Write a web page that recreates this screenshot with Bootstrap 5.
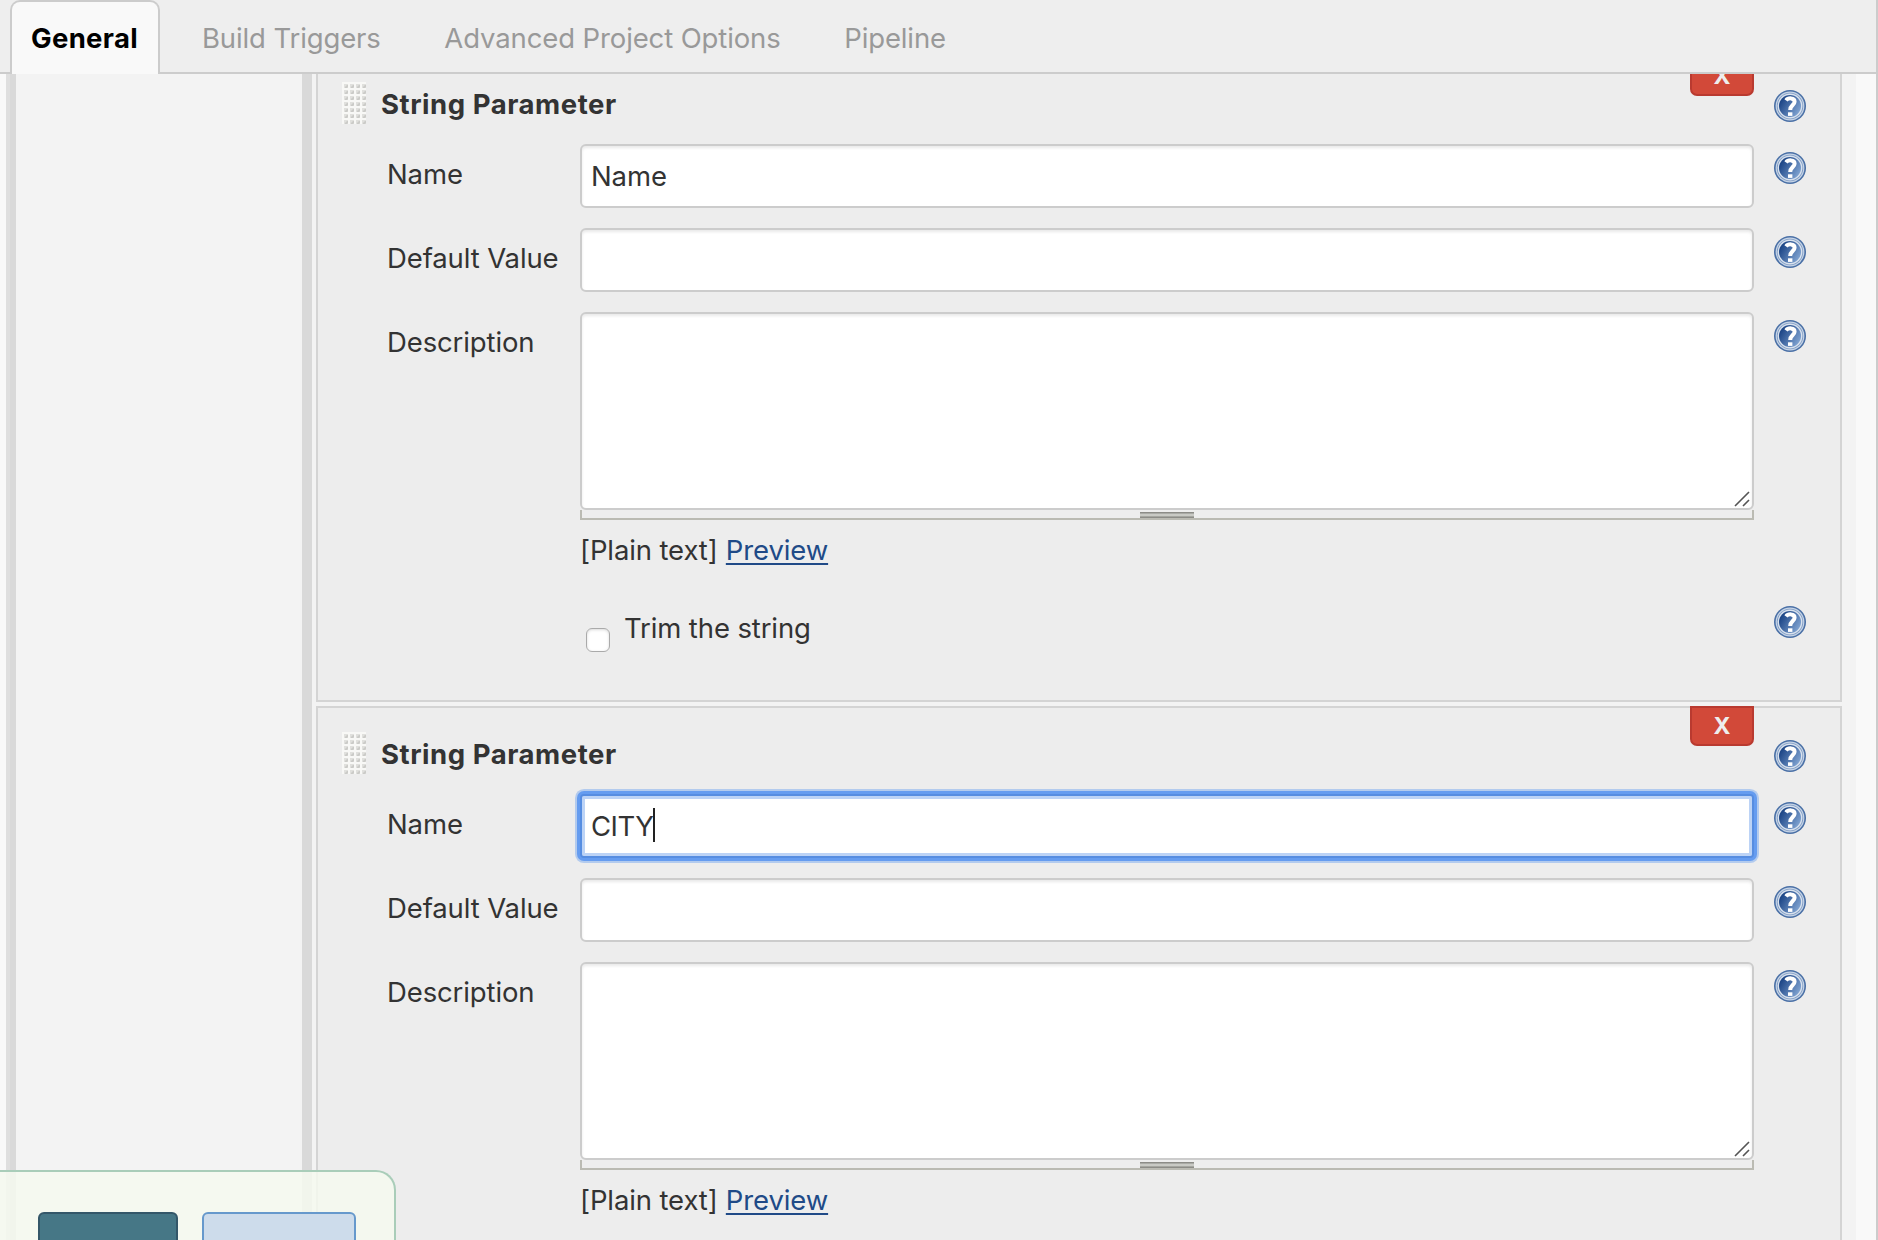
<!DOCTYPE html>
<html lang="en">
<head>
<meta charset="utf-8">
<title>Config</title>
<link href="https://cdn.jsdelivr.net/npm/bootstrap@5.3.0/dist/css/bootstrap.min.css" rel="stylesheet">
<script src="https://cdn.jsdelivr.net/npm/bootstrap@5.3.0/dist/js/bootstrap.bundle.min.js"></script>
<style>
body{font:400 27.5px/32px Inter,"Liberation Sans",sans-serif;letter-spacing:-.12px;color:#333;background:#f9f9f9;height:1240px;overflow:hidden}
.page-shell{height:1240px;border-right:2px solid #ccc}
.tab-bar{height:74px;padding-left:10px;background:linear-gradient(#ccc,#ccc) 0 72px/100% 2px no-repeat #eee}
.tab-bar .nav-link{height:74px;color:#999;padding:22px 0 0;border:0;margin-right:63.6px;white-space:nowrap}
.tab-bar .nav-link.active{width:150px;padding:20px 1px 0 0;margin-right:42px;text-align:center;color:#000;font-weight:700;letter-spacing:.3px;background:#f9f9f9;border:2px solid #ccc;border-bottom:0;border-radius:10px 10px 0 0}
.rail-a{width:10px;border-left:6px solid #f9f9f9;background:#dfdfdf}
.rail-b{width:6px;background:#d9d9d9}
.side-fill{width:286px;background:#f3f3f3}
.rail-c{width:10px;background:#d9d9d9}
.param-list{width:1544px;padding:0 14px 0 4px;background:#f3f3f3;margin-top:-18px}
.param{height:646px;border:2px solid #d4d4d4;background:#ededed;margin-bottom:4px;padding-right:34px}
.param-head{height:86px;padding-left:24px}
.grip{width:24px;height:42px;margin:24px 15px 0 0}
.param-title{margin-top:30px;font-weight:700;letter-spacing:.54px}
.btn-x{width:64px;height:40px;margin-top:-2px;padding:0;background:#d24939;border:2px solid #b93a30;border-radius:0 0 7px 7px;color:#eee;font-weight:700;font-size:23px;line-height:35px}
.btn-x:hover{background:#d24939;color:#eee}
.help{width:32px;height:32px;margin-left:20px;flex:none}
.param-head .help{margin-top:32px}
.param-row{padding-left:69px;margin-bottom:20px}
.param-row>.help{margin-top:8px}
.param-label{width:193px;padding-top:14px;white-space:nowrap}
.param-field{width:1174px}
.field-box{height:64px;border:2px solid #ccc;border-radius:6px;background:#fff;padding:14px 9px 0;font-size:inherit;line-height:32px;color:#333;box-shadow:inset 0 2px 3px rgba(0,0,0,.09)}
.field-box.is-focused{letter-spacing:-.5px;border-color:#568de1;border-radius:4px;box-shadow:0 0 0 3px #659cf0,0 0 0 5px #b3cbee,inset 0 0 0 3px #bcd3f6}
.caret{width:2px;height:34px;background:#222;margin-top:-2px}
.field-area{height:198px;padding:0 2px 1px}
.size-bar{height:10px;border:2px solid #bbbbb3;border-top:0;background:#eee;padding-top:2px}
.size-bar i{width:54px;height:6px;background:linear-gradient(#8c8c87 0 1px,#a9aaa5 1px 2px,#c9cac5 2px 4px,#a5a6a0 4px 5px,#8c8c87 5px 6px)}
.markup-note{margin-top:14px}
.markup-note a{color:#204a87;margin-left:.6px;text-underline-offset:3px;text-decoration-thickness:2px}
.trim-row{padding:40px 0 0 262px;margin:0}
.trim-row>.help{margin-top:0}
.trim-box{width:24px;height:24px;margin:22px 14px 0 6px;border:1.5px solid #aaa;border-radius:6px;background:#fff;box-shadow:inset 0 1px 3px rgba(0,0,0,.15)}
.trim-text{margin-top:6px}
.save-bar{left:0;bottom:0;width:396px;height:70px;padding:40px 0 0 38px;gap:24px;background:rgba(245,249,239,.86);border:solid #a9cdb9;border-width:2px 2px 0 0;border-radius:0 20px 0 0}
.act{height:40px;padding:0;border-radius:6px 6px 0 0;border-width:2px}
.act-main{width:140px;background:#467786;border-color:#345769}
.act-alt{width:154px;background:#cddceb;border-color:#6699cc}
</style>
</head>
<body>
<svg width="0" height="0" class="position-absolute" aria-hidden="true">
<defs>
<linearGradient id="blue" x1="0" y1=".2" x2="1" y2=".8"><stop offset=".1" stop-color="#1d4687"/><stop offset="1" stop-color="#86a9d6"/></linearGradient>
<symbol id="q" viewBox="0 0 32 32"><circle cx="16" cy="16" r="16" fill="#4a70a6"/><circle cx="16" cy="16" r="14.4" fill="#c6d4e6"/><circle cx="16" cy="16" r="13.2" fill="#7d9ac3"/><circle cx="16" cy="16" r="12.4" fill="#d9e2ee"/><circle cx="16" cy="16" r="11" fill="url(#blue)"/><path d="M12 10.4C14 7.7 20.6 7.3 20.6 11.7C20.6 15 16.2 15.2 16.2 20" fill="none" stroke="#fff" stroke-width="4"/><path d="M14 22.3h4.4v3.6H14z" fill="#fff"/></symbol>
<pattern id="dots" width="6" height="6" patternUnits="userSpaceOnUse"><path d="M0 0h6v6H0z" fill="#f8f8f6"/><path d="M2 2h4v4H2z" fill="#e0e0dd"/><path d="M3 5l2-2h1v2L5 6H3z" fill="#cbcbc8"/></pattern>
<symbol id="grip" viewBox="0 0 24 42"><path d="M0 0h24v42H0z" fill="url(#dots)"/></symbol>
<symbol id="corner" viewBox="0 0 16 16"><path d="M1 15L15 1M9 15l6-6" stroke="#555" stroke-width="1.6"/></symbol>
</defs>
</svg>
<div class="page-shell d-flex flex-column position-relative overflow-hidden">
<nav class="nav nav-tabs tab-bar flex-nowrap flex-shrink-0 border-0 position-relative z-1">
<a class="nav-link active">General</a><a class="nav-link">Build Triggers</a><a class="nav-link">Advanced Project Options</a><a class="nav-link">Pipeline</a>
</nav>
<div class="d-flex flex-grow-1 overflow-hidden">
<div class="rail-a flex-shrink-0"></div><div class="rail-b flex-shrink-0"></div><div class="side-fill flex-shrink-0"></div><div class="rail-c flex-shrink-0"></div>
<main class="param-list flex-shrink-0">
<section class="param">
<div class="param-head d-flex align-items-start"><svg class="grip"><use href="#grip"/></svg><div class="param-title">String Parameter</div><button class="btn btn-x ms-auto">X</button><svg class="help"><use href="#q"/></svg></div>
<div class="param-row d-flex align-items-start"><div class="param-label">Name</div><div class="param-field"><div class="form-control field-box">Name</div></div><svg class="help"><use href="#q"/></svg></div>
<div class="param-row d-flex align-items-start"><div class="param-label">Default Value</div><div class="param-field"><div class="form-control field-box"></div></div><svg class="help"><use href="#q"/></svg></div>
<div class="param-row d-flex align-items-start mb-0"><div class="param-label">Description</div><div class="param-field"><div class="form-control field-box field-area d-flex align-items-end justify-content-end"><svg width="16" height="16"><use href="#corner"/></svg></div><div class="size-bar d-flex justify-content-center"><i></i></div><div class="markup-note">[Plain text] <a href="#">Preview</a></div></div><svg class="help"><use href="#q"/></svg></div>
<div class="param-row trim-row d-flex align-items-start"><div class="trim-box"></div><div class="trim-text">Trim the string</div><svg class="help ms-auto"><use href="#q"/></svg></div>
</section>
<section class="param">
<div class="param-head d-flex align-items-start"><svg class="grip"><use href="#grip"/></svg><div class="param-title">String Parameter</div><button class="btn btn-x ms-auto">X</button><svg class="help"><use href="#q"/></svg></div>
<div class="param-row d-flex align-items-start"><div class="param-label">Name</div><div class="param-field"><div class="form-control field-box is-focused d-flex">CITY<span class="caret"></span></div></div><svg class="help"><use href="#q"/></svg></div>
<div class="param-row d-flex align-items-start"><div class="param-label">Default Value</div><div class="param-field"><div class="form-control field-box"></div></div><svg class="help"><use href="#q"/></svg></div>
<div class="param-row d-flex align-items-start mb-0"><div class="param-label">Description</div><div class="param-field"><div class="form-control field-box field-area d-flex align-items-end justify-content-end"><svg width="16" height="16"><use href="#corner"/></svg></div><div class="size-bar d-flex justify-content-center"><i></i></div><div class="markup-note">[Plain text] <a href="#">Preview</a></div></div><svg class="help"><use href="#q"/></svg></div>
</section>
</main>
</div>
<div class="save-bar position-absolute d-flex z-2"><div class="btn act act-main"></div><div class="btn act act-alt"></div></div>
</div>
</body>
</html>
